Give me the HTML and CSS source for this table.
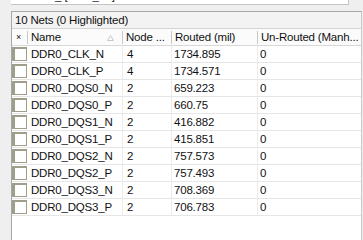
FILE: index.html
```html
<!DOCTYPE html>
<html>
<head>
<meta charset="utf-8">
<link rel="stylesheet" href="styles.css">
</head>
<body>
<div class="top">
  <div class="field"><span class="cut">Net_ [DDR_All]</span></div>
</div>
<div class="panel">
  <div class="title">10 Nets (0 Highlighted)</div>
  <div class="grid head">
    <div class="hc x">×</div>
    <div class="hc name">Name
      <svg class="sort" width="7" height="6" viewBox="0 0 7 6"><path d="M0.5 5.5 L3.5 0.5 L6.5 5.5 Z" fill="none" stroke="#c8c8c8" stroke-width="1"/></svg>
    </div>
    <div class="hc">Node ...</div>
    <div class="hc">Routed (mil)</div>
    <div class="hc last">Un-Routed (Manh...</div>
  </div>
  <div class="rows">
    <div class="grid row"><div class="c cb"><span class="box"></span></div><div class="c t1">DDR0_CLK_N</div><div class="c t2">4</div><div class="c t3">1734.895</div><div class="c t4">0</div></div>
    <div class="grid row"><div class="c cb"><span class="box"></span></div><div class="c t1">DDR0_CLK_P</div><div class="c t2">4</div><div class="c t3">1734.571</div><div class="c t4">0</div></div>
    <div class="grid row"><div class="c cb"><span class="box"></span></div><div class="c t1">DDR0_DQS0_N</div><div class="c t2">2</div><div class="c t3">659.223</div><div class="c t4">0</div></div>
    <div class="grid row"><div class="c cb"><span class="box"></span></div><div class="c t1">DDR0_DQS0_P</div><div class="c t2">2</div><div class="c t3">660.75</div><div class="c t4">0</div></div>
    <div class="grid row"><div class="c cb"><span class="box"></span></div><div class="c t1">DDR0_DQS1_N</div><div class="c t2">2</div><div class="c t3">416.882</div><div class="c t4">0</div></div>
    <div class="grid row"><div class="c cb"><span class="box"></span></div><div class="c t1">DDR0_DQS1_P</div><div class="c t2">2</div><div class="c t3">415.851</div><div class="c t4">0</div></div>
    <div class="grid row"><div class="c cb"><span class="box"></span></div><div class="c t1">DDR0_DQS2_N</div><div class="c t2">2</div><div class="c t3">757.573</div><div class="c t4">0</div></div>
    <div class="grid row"><div class="c cb"><span class="box"></span></div><div class="c t1">DDR0_DQS2_P</div><div class="c t2">2</div><div class="c t3">757.493</div><div class="c t4">0</div></div>
    <div class="grid row"><div class="c cb"><span class="box"></span></div><div class="c t1">DDR0_DQS3_N</div><div class="c t2">2</div><div class="c t3">708.369</div><div class="c t4">0</div></div>
    <div class="grid row"><div class="c cb"><span class="box"></span></div><div class="c t1">DDR0_DQS3_P</div><div class="c t2">2</div><div class="c t3">706.783</div><div class="c t4">0</div></div>
  </div>
</div>
</body>
</html>
```
FILE: styles.css
```css
html, body {
  margin: 0;
  padding: 0;
}
body {
  width: 363px;
  height: 240px;
  overflow: hidden;
  background: #efefef;
  font-family: "Liberation Sans", Arial, sans-serif;
  font-size: 11.5px;
  color: #111;
}
.top {
  height: 11px;
  display: flex;
}
.field {
  margin-left: 11px;
  width: 337px;
  height: 4px;
  background: #fff;
  border-right: 1px solid #c4c4c4;
  border-bottom: 1px solid #c4c4c4;
  overflow: hidden;
  position: relative;
}
.cut {
  position: absolute;
  left: 26px;
  top: -10px;
  line-height: 13px;
  color: #222;
}
.panel {
  margin-left: 11px;
  width: 349px;
  height: 229px;
  border-top: 1px solid #a8a8a8;
  border-left: 1px solid #a8a8a8;
  border-right: 1px solid #c8c8c8;
  background: #fff;
  overflow: hidden;
}
.title {
  height: 16px;
  line-height: 16px;
  padding-left: 3px;
  background: #f3f3f3;
  border-bottom: 1px solid #d4d4d4;
  letter-spacing: -0.2px;
}
.grid {
  display: grid;
  grid-template-columns: 16px 95px 49px 86px 1fr;
}
.head {
  height: 16px;
  background: #fbfbfb;
  border-bottom: 1px solid #d8d8d8;
}
.hc {
  padding-left: 3px;
  border-right: 1px solid #c8c8c8;
  margin: 2px 0 1px;
  line-height: 13px;
  white-space: nowrap;
  overflow: hidden;
  letter-spacing: -0.2px;
  display: flex;
  align-items: center;
}
.hc.x {
  font-size: 9px;
  padding-left: 4px;
  align-items: flex-start;
}
.hc.name {
  justify-content: space-between;
  padding-right: 8px;
}
.hc.last {
  border-right: none;
}
.sort {
  display: block;
}
.row {
  height: 16px;
  border-bottom: 1px solid #e6e6e6;
}
.c {
  line-height: 16px;
  white-space: nowrap;
  overflow: hidden;
  border-right: 1px solid #ececec;
  letter-spacing: -0.2px;
}
.cb {
  padding: 1px 0 0 0;
  border-right: none;
}
.box {
  display: block;
  width: 11px;
  height: 11px;
  background: #fff;
  border-left: 3px solid #9e9e8a;
  border-top: 2px solid #9e9e8a;
  border-right: 1px solid #9e9e8a;
  border-bottom: 1px solid #9e9e8a;
}
.t1 { padding-left: 3px; }
.t2 { padding-left: 4px; }
.t3 { padding-left: 2px; }
.t4 { padding-left: 2px; border-right: none; }
```
